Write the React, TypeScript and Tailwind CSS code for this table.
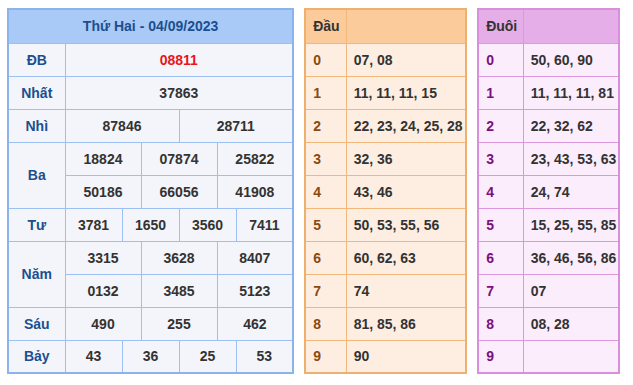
import React from "react";

const B = "border border-[#9cc0f2]";
const cellNum = `${B} text-center text-[#333333] h-[33px] p-0`;
const lab = `${B} text-center text-[#1c4f8f] h-[33px] p-0 w-[58px]`;

function Main() {
  const cols = Array.from({ length: 12 });
  return (
    <table className="table-fixed border-collapse border-2 border-[#8db3ee] w-[283px] bg-[#f3f5fa]">
      <colgroup>
        <col style={{ width: 57 }} />
        {cols.map((_, i) => (
          <col key={i} style={{ width: 19 }} />
        ))}
      </colgroup>
      <tbody>
        <tr>
          <td colSpan={13} className={`${B} bg-[#a9c9f6] h-[34px] text-center text-[#1c4f8f] p-0`}>
            Thứ Hai - 04/09/2023
          </td>
        </tr>
        <tr>
          <td className={lab}>ĐB</td>
          <td colSpan={12} className={`${cellNum} !text-[#e8161b]`}>08811</td>
        </tr>
        <tr>
          <td className={lab}>Nhất</td>
          <td colSpan={12} className={cellNum}>37863</td>
        </tr>
        <tr>
          <td className={lab}>Nhì</td>
          <td colSpan={6} className={cellNum}>87846</td>
          <td colSpan={6} className={cellNum}>28711</td>
        </tr>
        <tr>
          <td rowSpan={2} className={lab}>Ba</td>
          <td colSpan={4} className={cellNum}>18824</td>
          <td colSpan={4} className={cellNum}>07874</td>
          <td colSpan={4} className={cellNum}>25822</td>
        </tr>
        <tr>
          <td colSpan={4} className={cellNum}>50186</td>
          <td colSpan={4} className={cellNum}>66056</td>
          <td colSpan={4} className={cellNum}>41908</td>
        </tr>
        <tr>
          <td className={lab}>Tư</td>
          <td colSpan={3} className={cellNum}>3781</td>
          <td colSpan={3} className={cellNum}>1650</td>
          <td colSpan={3} className={cellNum}>3560</td>
          <td colSpan={3} className={cellNum}>7411</td>
        </tr>
        <tr>
          <td rowSpan={2} className={lab}>Năm</td>
          <td colSpan={4} className={cellNum}>3315</td>
          <td colSpan={4} className={cellNum}>3628</td>
          <td colSpan={4} className={cellNum}>8407</td>
        </tr>
        <tr>
          <td colSpan={4} className={cellNum}>0132</td>
          <td colSpan={4} className={cellNum}>3485</td>
          <td colSpan={4} className={cellNum}>5123</td>
        </tr>
        <tr>
          <td className={lab}>Sáu</td>
          <td colSpan={4} className={cellNum}>490</td>
          <td colSpan={4} className={cellNum}>255</td>
          <td colSpan={4} className={cellNum}>462</td>
        </tr>
        <tr>
          <td className={lab}>Bảy</td>
          <td colSpan={3} className={cellNum}>43</td>
          <td colSpan={3} className={cellNum}>36</td>
          <td colSpan={3} className={cellNum}>25</td>
          <td colSpan={3} className={cellNum}>53</td>
        </tr>
      </tbody>
    </table>
  );
}

const dau = ["07, 08", "11, 11, 11, 15", "22, 23, 24, 25, 28", "32, 36", "43, 46", "50, 53, 55, 56", "60, 62, 63", "74", "81, 85, 86", "90"];
const duoi = ["50, 60, 90", "11, 11, 11, 81", "22, 32, 62", "23, 43, 53, 63", "24, 74", "15, 25, 55, 85", "36, 46, 56, 86", "07", "08, 28", ""];

function Side({
  title,
  data,
  width,
  labW,
  outer,
  inner,
  head,
  bg,
  labColor,
}: {
  title: string;
  data: string[];
  width: string;
  labW: string;
  outer: string;
  inner: string;
  head: string;
  bg: string;
  labColor: string;
}) {
  return (
    <table className={`table-fixed border-collapse border-2 ${outer} ${width} ${bg}`}>
      <tbody>
        <tr className={head}>
          <td className={`border ${inner} ${labW} h-[34px] pl-[7px] p-0 text-[#333333]`}>{title}</td>
          <td className={`border ${inner} h-[34px] p-0`}></td>
        </tr>
        {data.map((d, i) => (
          <tr key={i}>
            <td className={`border ${inner} h-[33px] pl-[7px] p-0 ${labColor}`}>{i}</td>
            <td className={`border ${inner} h-[33px] pl-[7px] p-0 text-[#333333]`}>{d}</td>
          </tr>
        ))}
      </tbody>
    </table>
  );
}

export default function App() {
  return (
    <div
      className="w-[633px] h-[385px] bg-white flex items-start pt-[8px] pl-[7px] text-[14px] font-bold leading-none"
      style={{ fontFamily: '"Liberation Sans", Arial, sans-serif' }}
    >
      <Main />
      <div className="ml-[10px]">
        <Side
          title="Đầu"
          data={dau}
          width="w-[163px]"
          labW="w-[41px]"
          outer="border-[#eeb06e]"
          inner="border-[#f2b77a]"
          head="bg-[#fbcb9c]"
          bg="bg-[#fdeee1]"
          labColor="text-[#8a4a10]"
        />
      </div>
      <div className="ml-[10px]">
        <Side
          title="Đuôi"
          data={duoi}
          width="w-[143px]"
          labW="w-[45px]"
          outer="border-[#d98fdc]"
          inner="border-[#dc98de]"
          head="bg-[#e6aee8]"
          bg="bg-[#fcedfc]"
          labColor="text-[#7a107e]"
        />
      </div>
    </div>
  );
}
